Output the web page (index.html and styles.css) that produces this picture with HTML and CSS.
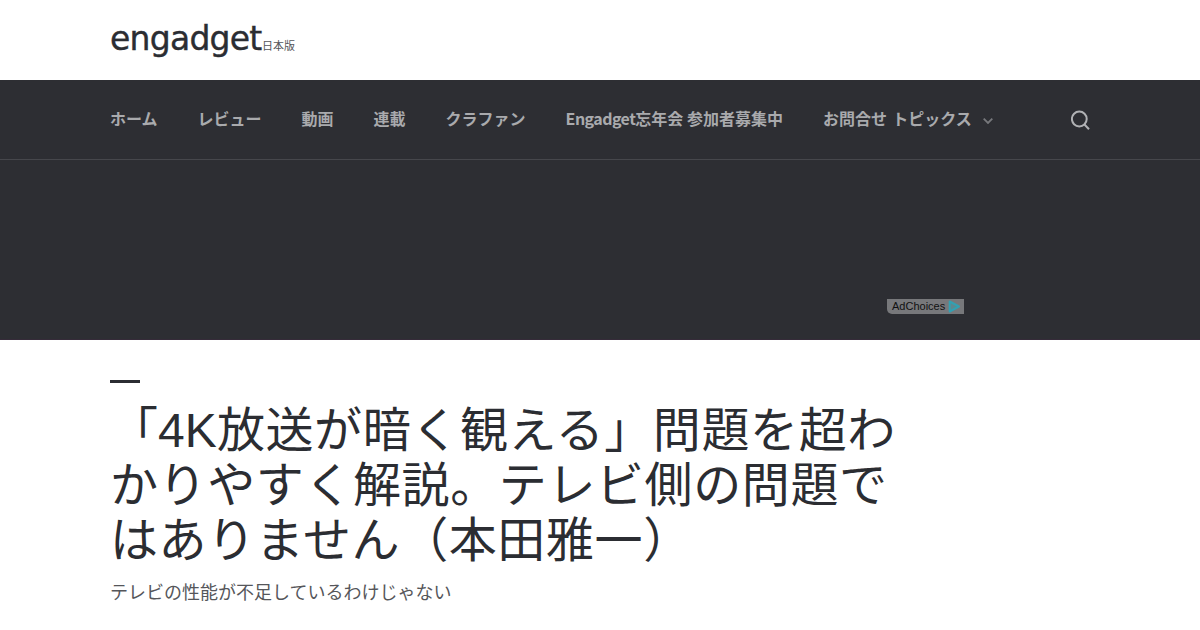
FILE: index.html
```html
<!DOCTYPE html>
<html lang="ja">
<head>
<meta charset="utf-8">
<title>Engadget 日本版</title>
<link rel="stylesheet" href="styles.css">
</head>
<body>
<header class="masthead">
  <a class="brand">
    <span class="wordmark">engadget</span>
    <span class="edition">日本版</span>
  </a>
</header>
<nav class="nav">
  <div class="nav-inner">
    <a>ホーム</a><a>レビュー</a><a>動画</a><a>連載</a><a>クラファン</a><a><span class="latin">Engadget</span>忘年会 参加者募集中</a>
    <a class="topics">お問合せ トピックス
      <svg class="chevron" width="10" height="6" viewBox="0 0 10 6"><path d="M.7.7 5 5 9.3.7"/></svg></a>
    <svg class="search" width="20" height="20" viewBox="0 0 20 20"><circle cx="8.3" cy="9" r="7.4"/><path d="m13 14 5 5.2"/></svg>
  </div>
</nav>
<section class="ad">
  <div class="ad-inner"><div class="choices"><span>AdChoices</span><svg width="13" height="13" viewBox="0 0 13 13"><path d="M1.7 1.5v10L11 6.5z"/></svg></div></div>
</section>
<main class="article">
  <div class="rule"></div>
  <h1><span class="lead">「4K</span>放送が暗く観える」問題を超わ<br>かりやすく解説。テレビ側の問題で<br>はありません（本田雅一）</h1>
  <p>テレビの性能が不足しているわけじゃない</p>
</main>
</body>
</html>
```

FILE: styles.css
```css
* { box-sizing: border-box; }
body {
  margin: 0;
  height: 630px;
  overflow: hidden;
  background: #fff;
  color: #2b2d32;
  font-family: "Liberation Sans", "Noto Sans CJK JP", sans-serif;
}
.masthead, .nav-inner, .article { padding: 0 110px; }
.masthead { height: 80px; padding-top: 20px; }
.brand { display: flex; align-items: flex-start; }
.wordmark { width: 152px; font: 33px/37px "DejaVu Sans", sans-serif; letter-spacing: -.75px; -webkit-text-stroke: .4px #2b2d32; }
.edition { font-size: 11px; line-height: 16px; margin-top: 18px; color: #55565a; }
.nav { height: 80px; background: #2d2e33; border-bottom: 1px solid #46474c; }
.nav-inner { height: 79px; display: flex; align-items: center; gap: 40px; white-space: nowrap; }
.nav a { color: #a9aaad; font: 700 16px/24px "Noto Sans CJK JP", sans-serif; padding-bottom: 3px; }
.latin { letter-spacing: -.55px; }
.topics { display: flex; align-items: center; gap: 11px; word-spacing: 1.5px; }
.chevron { margin-top: 5px; fill: none; stroke: #77787c; stroke-width: 1.8; }
.search { margin-left: auto; fill: none; stroke: #b0b1b4; stroke-width: 2; position: relative; left: 1px; }
.ad { height: 180px; background: #2d2e33; border-bottom: 1px solid #352b39; padding-top: 139px; }
.ad-inner { width: 728px; margin: 0 auto; display: flex; justify-content: flex-end; }
.choices {
  width: 77px; height: 15px; display: flex; align-items: center; justify-content: space-between;
  padding: 0 3px 0 5px; background: #77787b; border-bottom-left-radius: 5px;
  font-size: 11px; line-height: 15px; color: #111;
}
.choices svg { flex: none; fill: #5b8991; stroke: #32a0b2; stroke-width: 2; stroke-linejoin: round; }
.article { padding-top: 40px; }
.rule { width: 30px; height: 3px; background: #2b2d32; }
h1 { width: 800px; margin: 20px 0 0; font-size: 48px; line-height: 55px; font-weight: 400; letter-spacing: .6px; white-space: nowrap; }
.lead { letter-spacing: .05px; }
p { margin: 13px 0 0; font-size: 18px; line-height: 24px; color: #55565a; }
```
